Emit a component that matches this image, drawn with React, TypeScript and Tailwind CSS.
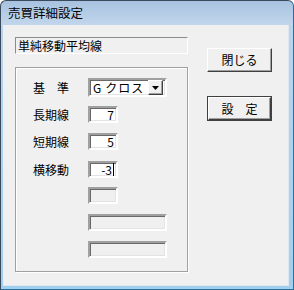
const font = { fontFamily: '"Noto Sans CJK JP", "Liberation Sans", sans-serif' };

const Sunken = ({ w, h, children, disabled = false }: { w: number; h: number; children?: React.ReactNode; disabled?: boolean }) => (
  <div
    className={`box-border flex shrink-0 items-center justify-end border-2 border-t-[#a0a0a0] border-l-[#a0a0a0] border-b-white border-r-white shadow-[inset_1px_1px_0_#696969,inset_-1px_-1px_0_#e3e3e3] pr-[2px] text-[12px] leading-none ${disabled ? 'bg-[#f0f0f0]' : 'bg-white'}`}
    style={{ width: w, height: h }}
  >
    {children}
  </div>
);

const Label = ({ text }: { text: string }) => (
  <div className="w-[72px] shrink-0 pl-[17px] text-[12px] leading-none whitespace-pre">{text}</div>
);

const RaisedButton = ({ label, primary = false }: { label: string; primary?: boolean }) => {
  const inner = (
    <div className="box-border flex h-full w-full items-center justify-center border border-t-white border-l-white border-b-[#404040] border-r-[#404040] bg-[#f0f0f0] shadow-[inset_-1px_-1px_0_#a0a0a0] text-[12px] leading-none whitespace-pre">
      {label}
    </div>
  );
  if (primary) {
    return <div className="box-border h-[25px] w-[65px] border border-[#404040]">{inner}</div>;
  }
  return <div className="h-[24px] w-[65px]">{inner}</div>;
};

export default function App() {
  return (
    <div className="h-[290px] w-[294px] bg-white text-black" style={font}>
      <div className="box-border flex h-[290px] w-[294px] flex-col rounded-t-[6px] border border-[#3a4a5c] border-r-[#2a6f9a] border-b-[#2a6f9a] bg-[linear-gradient(#a7c2e0,#c2d6ec_24px,#b9d4ee_26px,#9fd0f0)] pl-[2px] pr-[4px] pb-[3px]">
        {/* title bar */}
        <div className="flex h-[24px] shrink-0 items-center pl-[5px] text-[12.5px]">売買詳細設定</div>

        {/* client area */}
        <div className="flex flex-1 border-r border-b border-[#dfe8f1] bg-[#f0f0f0] pl-[12px] pt-[12px]">
          <div className="flex w-[173px] shrink-0 flex-col">
            <div className="box-border flex h-[17px] items-center border border-t-[#8c8c8c] border-l-[#8c8c8c] border-b-white border-r-white pl-[2px] text-[12px] leading-none">
              単純移動平均線
            </div>

            <div className="mt-[13px] box-border h-[205px] border border-[#a0a0a0] pt-[10px] shadow-[inset_1px_1px_0_#fff,1px_1px_0_#fff]">
              <div className="flex h-[19px] items-center">
                <Label text={'基　準'} />
                <div className="box-border flex h-[19px] w-[79px] shrink-0 items-center border-2 border-t-[#a0a0a0] border-l-[#a0a0a0] border-b-white border-r-white bg-white shadow-[inset_1px_1px_0_#696969,inset_-1px_-1px_0_#e3e3e3]">
                  <span className="flex-1 pl-[3px] text-[12px] leading-none tracking-[1px]">
                    G<span className="ml-[3px]">クロス</span>
                  </span>
                  <div className="mr-[2px] box-border flex h-[15px] w-[15px] items-center justify-center border border-t-white border-l-white border-b-[#404040] border-r-[#404040] bg-[#f0f0f0] shadow-[inset_-1px_-1px_0_#a0a0a0]">
                    <svg width="7" height="4" viewBox="0 0 7 4">
                      <path d="M0 0h7L3.5 4z" fill="#000" />
                    </svg>
                  </div>
                </div>
              </div>

              <div className="mt-[9px] flex h-[17px] items-center">
                <Label text="長期線" />
                <Sunken w={30} h={17}>7</Sunken>
              </div>

              <div className="mt-[10px] flex h-[17px] items-center">
                <Label text="短期線" />
                <Sunken w={30} h={17}>5</Sunken>
              </div>

              <div className="mt-[11px] flex h-[17px] items-center">
                <Label text="横移動" />
                <Sunken w={30} h={17}>
                  -3<span className="ml-[1px] h-[13px] w-px bg-black" />
                </Sunken>
              </div>

              <div className="mt-[9px] flex h-[17px] items-center">
                <Label text="" />
                <Sunken w={30} h={17} disabled />
              </div>

              <div className="mt-[10px] flex h-[17px] items-center">
                <Label text="" />
                <Sunken w={79} h={17} disabled />
              </div>

              <div className="mt-[10px] flex h-[17px] items-center">
                <Label text="" />
                <Sunken w={79} h={17} disabled />
              </div>
            </div>
          </div>

          <div className="ml-[19px] mt-[11px] flex flex-col gap-[24px]">
            <RaisedButton label="閉じる" />
            <RaisedButton label={'設　定'} primary />
          </div>
        </div>
      </div>
    </div>
  );
}
